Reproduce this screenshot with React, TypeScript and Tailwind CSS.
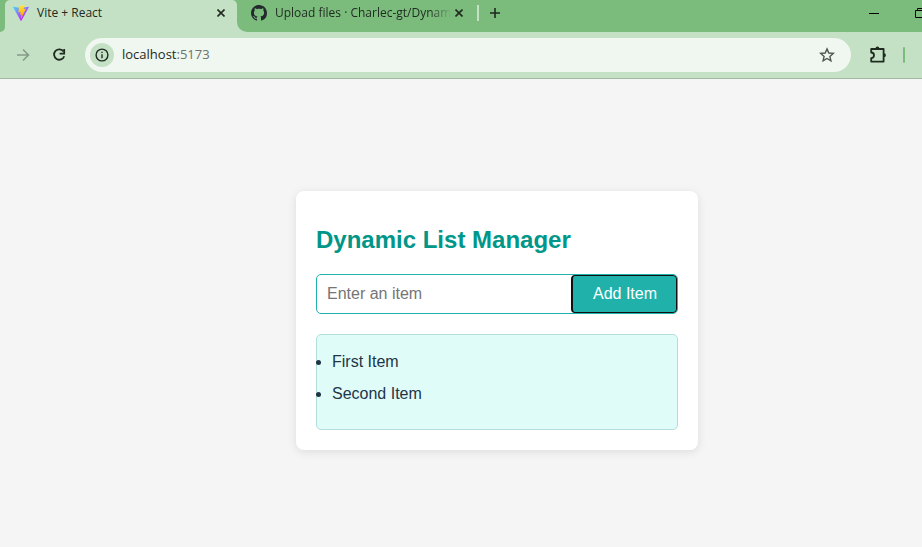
import { useState } from "react";
import type { FormEvent, ReactNode } from "react";

const uiFont = "font-['Open_Sans','Noto_Sans',sans-serif]";

function IconButton({ label, className = "", children }: { label: string; className?: string; children: ReactNode }) {
  return (
    <button type="button" aria-label={label} className={`flex shrink-0 items-center justify-center ${className}`}>
      {children}
    </button>
  );
}

function CloseIcon() {
  return (
    <svg width="8" height="8" viewBox="0 0 8 8" stroke="#1f2a20" strokeWidth="1.6" aria-hidden="true">
      <path d="M.5.5l7 7M7.5.5l-7 7" />
    </svg>
  );
}

function ViteLogo() {
  return (
    <svg width="16" height="16" viewBox="0 0 256 257" aria-hidden="true">
      <defs>
        <linearGradient id="viteBody" x1="-.8%" x2="57.6%" y1="7.7%" y2="78.4%">
          <stop offset="0%" stopColor="#41D1FF" />
          <stop offset="100%" stopColor="#BD34FE" />
        </linearGradient>
        <linearGradient id="viteBolt" x1="43.4%" x2="50.3%" y1="2.2%" y2="89%">
          <stop offset="0%" stopColor="#FFEA83" />
          <stop offset="8.3%" stopColor="#FFDD35" />
          <stop offset="100%" stopColor="#FFA800" />
        </linearGradient>
      </defs>
      <path fill="url(#viteBody)" d="M255.153 37.938L134.897 252.976c-2.483 4.44-8.862 4.466-11.382.048L.875 37.958c-2.746-4.814 1.371-10.646 6.827-9.67l120.385 21.517a6.537 6.537 0 0 0 2.322-.004l117.867-21.483c5.438-.991 9.574 4.796 6.877 9.62Z" />
      <path fill="url(#viteBolt)" d="M185.432.063L96.44 17.501a3.268 3.268 0 0 0-2.634 3.014l-5.474 92.456a3.268 3.268 0 0 0 3.997 3.378l24.777-5.718c2.318-.535 4.413 1.507 3.936 3.838l-7.361 36.047c-.495 2.426 1.782 4.5 4.151 3.78l15.304-4.649c2.372-.72 4.652 1.36 4.15 3.788l-11.698 56.621c-.732 3.542 3.979 5.473 5.943 2.437l1.313-2.028l72.516-144.72c1.215-2.423-.88-5.186-3.54-4.672l-25.505 4.922c-2.396.462-4.435-1.77-3.759-4.114l16.646-57.705c.677-2.35-1.37-4.583-3.769-4.113Z" />
    </svg>
  );
}

function GithubLogo() {
  return (
    <svg width="16" height="16" viewBox="0 0 16 16" fill="#24292e" className="shrink-0" aria-hidden="true">
      <path d="M8 0C3.58 0 0 3.58 0 8c0 3.54 2.29 6.53 5.47 7.59.4.07.55-.17.55-.38 0-.19-.01-.82-.01-1.49-2.01.37-2.53-.49-2.69-.94-.09-.23-.48-.94-.82-1.13-.28-.15-.68-.52-.01-.53.63-.01 1.08.58 1.23.82.72 1.21 1.87.87 2.33.66.07-.52.28-.87.51-1.07-1.78-.2-3.64-.89-3.64-3.95 0-.87.31-1.59.82-2.15-.08-.2-.36-1.02.08-2.12 0 0 .67-.21 2.2.82.64-.18 1.32-.27 2-.27s1.36.09 2 .27c1.53-1.04 2.2-.82 2.2-.82.44 1.1.16 1.92.08 2.12.51.56.82 1.27.82 2.15 0 3.07-1.87 3.75-3.65 3.95.29.25.54.73.54 1.48 0 1.07-.01 1.93-.01 2.2 0 .21.15.46.55.38A8.01 8.01 0 0 0 16 8c0-4.42-3.58-8-8-8z" />
    </svg>
  );
}

function TabStrip() {
  return (
    <div className={`flex h-8 bg-[#c5e1c5] text-xs text-[#1f2a20] ${uiFont}`}>
      <div className="w-[5px] shrink-0 rounded-br-[5px] bg-[#7bbb7c]" />
      <div className="w-[232px] shrink-0 bg-linear-to-b from-[#7bbb7c] from-50% to-[#c5e1c5] to-50%">
        <div className="flex h-full items-center rounded-t-[5px] bg-[#c5e1c5] pr-3 pb-[7px] pl-2">
          <ViteLogo />
          <span className="ml-2 flex-1">Vite + React</span>
          <IconButton label="Close Vite + React">
            <CloseIcon />
          </IconButton>
        </div>
      </div>
      <div className="flex min-w-0 flex-1 items-center overflow-hidden rounded-bl-[10px] bg-[#7bbb7c] pb-[7px] pl-[14px]">
        <GithubLogo />
        <span className="ml-2 w-[176px] shrink-0 mask-r-from-88% whitespace-nowrap">
          Upload files · Charlec-gt/Dynam
        </span>
        <IconButton label="Close Upload files" className="ml-1">
          <CloseIcon />
        </IconButton>
        <div className="ml-[14px] h-4 w-[2px] shrink-0 bg-[#c5e1c5]" />
        <IconButton label="New tab" className="ml-[11px]">
          <svg width="10" height="10" viewBox="0 0 10 10" stroke="#1f2a20" strokeWidth="1.6" aria-hidden="true">
            <path d="M5 0v10M0 5h10" />
          </svg>
        </IconButton>
        <IconButton label="Minimize" className="ml-auto">
          <svg width="10" height="10" viewBox="0 0 10 10" aria-hidden="true">
            <path d="M0 5h10v1H0z" />
          </svg>
        </IconButton>
        <IconButton label="Restore" className="-mr-[3px] ml-9">
          <svg width="10" height="10" viewBox="0 0 10 10" fill="none" stroke="#000" aria-hidden="true">
            <path d="M.5 2.5h7v7h-7zM2.5 2.5v-2h7v7h-2" />
          </svg>
        </IconButton>
      </div>
    </div>
  );
}

function Toolbar() {
  return (
    <div className={`flex h-[47px] items-center overflow-hidden border-b border-[#a3b9a3] bg-[#c5e1c5] ${uiFont}`}>
      <IconButton label="Forward" className="ml-[15px]">
        <svg width="16" height="16" viewBox="0 0 16 16" fill="none" stroke="#869a87" strokeWidth="1.6" aria-hidden="true">
          <path d="M2 8h11M8 2.5L13.500 8 8 13.500" />
        </svg>
      </IconButton>
      <IconButton label="Reload" className="ml-5">
        <svg width="16" height="16" viewBox="0 0 16 16" fill="none" stroke="#1f2a20" strokeWidth="1.8" aria-hidden="true">
          <path d="M12.600 4.600A5.200 5.200 0 1 0 13.200 9.200" />
          <path d="M13.200 2v4.600H8.600" />
        </svg>
      </IconButton>
      <div className="ml-[18px] flex h-[34px] min-w-0 flex-1 items-center rounded-full bg-[#f0f7f0] pr-4 pl-[5px]">
        <IconButton label="View site information" className="size-6 rounded-full bg-[#c5e1c5]">
          <svg width="14" height="14" viewBox="0 0 14 14" fill="none" stroke="#1f2a20" strokeWidth="1.4" aria-hidden="true">
            <circle cx="7" cy="7" r="5.900" />
            <path d="M7 6.200v4M7 3.700v1.300" />
          </svg>
        </IconButton>
        <a href="http://localhost:5173" className="ml-2 flex-1 text-[13px] text-[#1f2a20]">
          localhost<span className="text-[#68736a]">:5173</span>
        </a>
        <IconButton label="Bookmark this tab">
          <svg width="16" height="16" viewBox="0 0 16 16" fill="none" stroke="#4d554e" strokeWidth="1.4" aria-hidden="true">
            <path d="M8 1.900l1.800 4.100 4.500.4-3.400 3 1 4.400L8 11.500l-3.900 2.300 1-4.400-3.400-3 4.500-.4z" />
          </svg>
        </IconButton>
      </div>
      <IconButton label="Extensions" className="ml-[17px]">
        <svg width="20" height="18" viewBox="0 0 20 18" fill="none" stroke="#1f2a20" strokeWidth="1.800" strokeLinejoin="round" aria-hidden="true">
          <path d="M3.200 3h12.400v12.600H3.200v-3.500a2.800 2.800 0 0 0 0-5.600z" />
          <path d="M7.500 2.500a1.900 1.900 0 0 1 3.800 0zM16 7.300a1.900 1.900 0 0 1 0 3.800z" fill="#1f2a20" stroke="none" />
        </svg>
      </IconButton>
      <div className="mr-[17px] ml-[15px] h-4 w-[2px] shrink-0 rounded-full bg-[#7bbb7c]" />
    </div>
  );
}

function ListManager() {
  const [items, setItems] = useState(["First Item", "Second Item"]);
  const [draft, setDraft] = useState("");

  const addItem = (event: FormEvent) => {
    event.preventDefault();
    if (!draft.trim()) return;
    setItems([...items, draft.trim()]);
    setDraft("");
  };

  return (
    <section className="w-full max-w-[402px] rounded-lg bg-white px-5 pt-[35px] pb-5 shadow-[0_2px_10px_rgba(0,0,0,0.1)]">
      <h2 className="text-2xl leading-7 font-bold text-[#009688]">Dynamic List Manager</h2>
      <form onSubmit={addItem} className="mt-5 flex h-10 overflow-hidden rounded-[5px] border border-[#20b2aa]">
        <input
          aria-label="Enter an item"
          value={draft}
          onChange={(event) => setDraft(event.target.value)}
          placeholder="Enter an item"
          className="min-w-0 flex-1 px-[10px] text-base outline-none placeholder:text-[#757575]"
        />
        <button type="submit" className="rounded-[4px] border border-l-2 border-[#101010] bg-[#20b2aa] pr-[19px] pl-5 text-base text-white">
          Add Item
        </button>
      </form>
      <ul className="mt-5 list-disc rounded-[5px] border border-[#b2dfdb] bg-[#e0fcf8] pt-[11px] pr-[15px] pb-[19px] pl-[15px] text-base leading-8 text-[#213547]">
        {items.map((item, index) => (
          <li key={index}>{item}</li>
        ))}
      </ul>
    </section>
  );
}

export default function App() {
  return (
    <div className="flex min-h-screen flex-col bg-[#f5f5f5] font-['Liberation_Sans',Arial,sans-serif]">
      <header>
        <TabStrip />
        <Toolbar />
      </header>
      <main className="flex flex-1 items-start justify-center pt-28 pl-[72px]">
        <ListManager />
      </main>
    </div>
  );
}
